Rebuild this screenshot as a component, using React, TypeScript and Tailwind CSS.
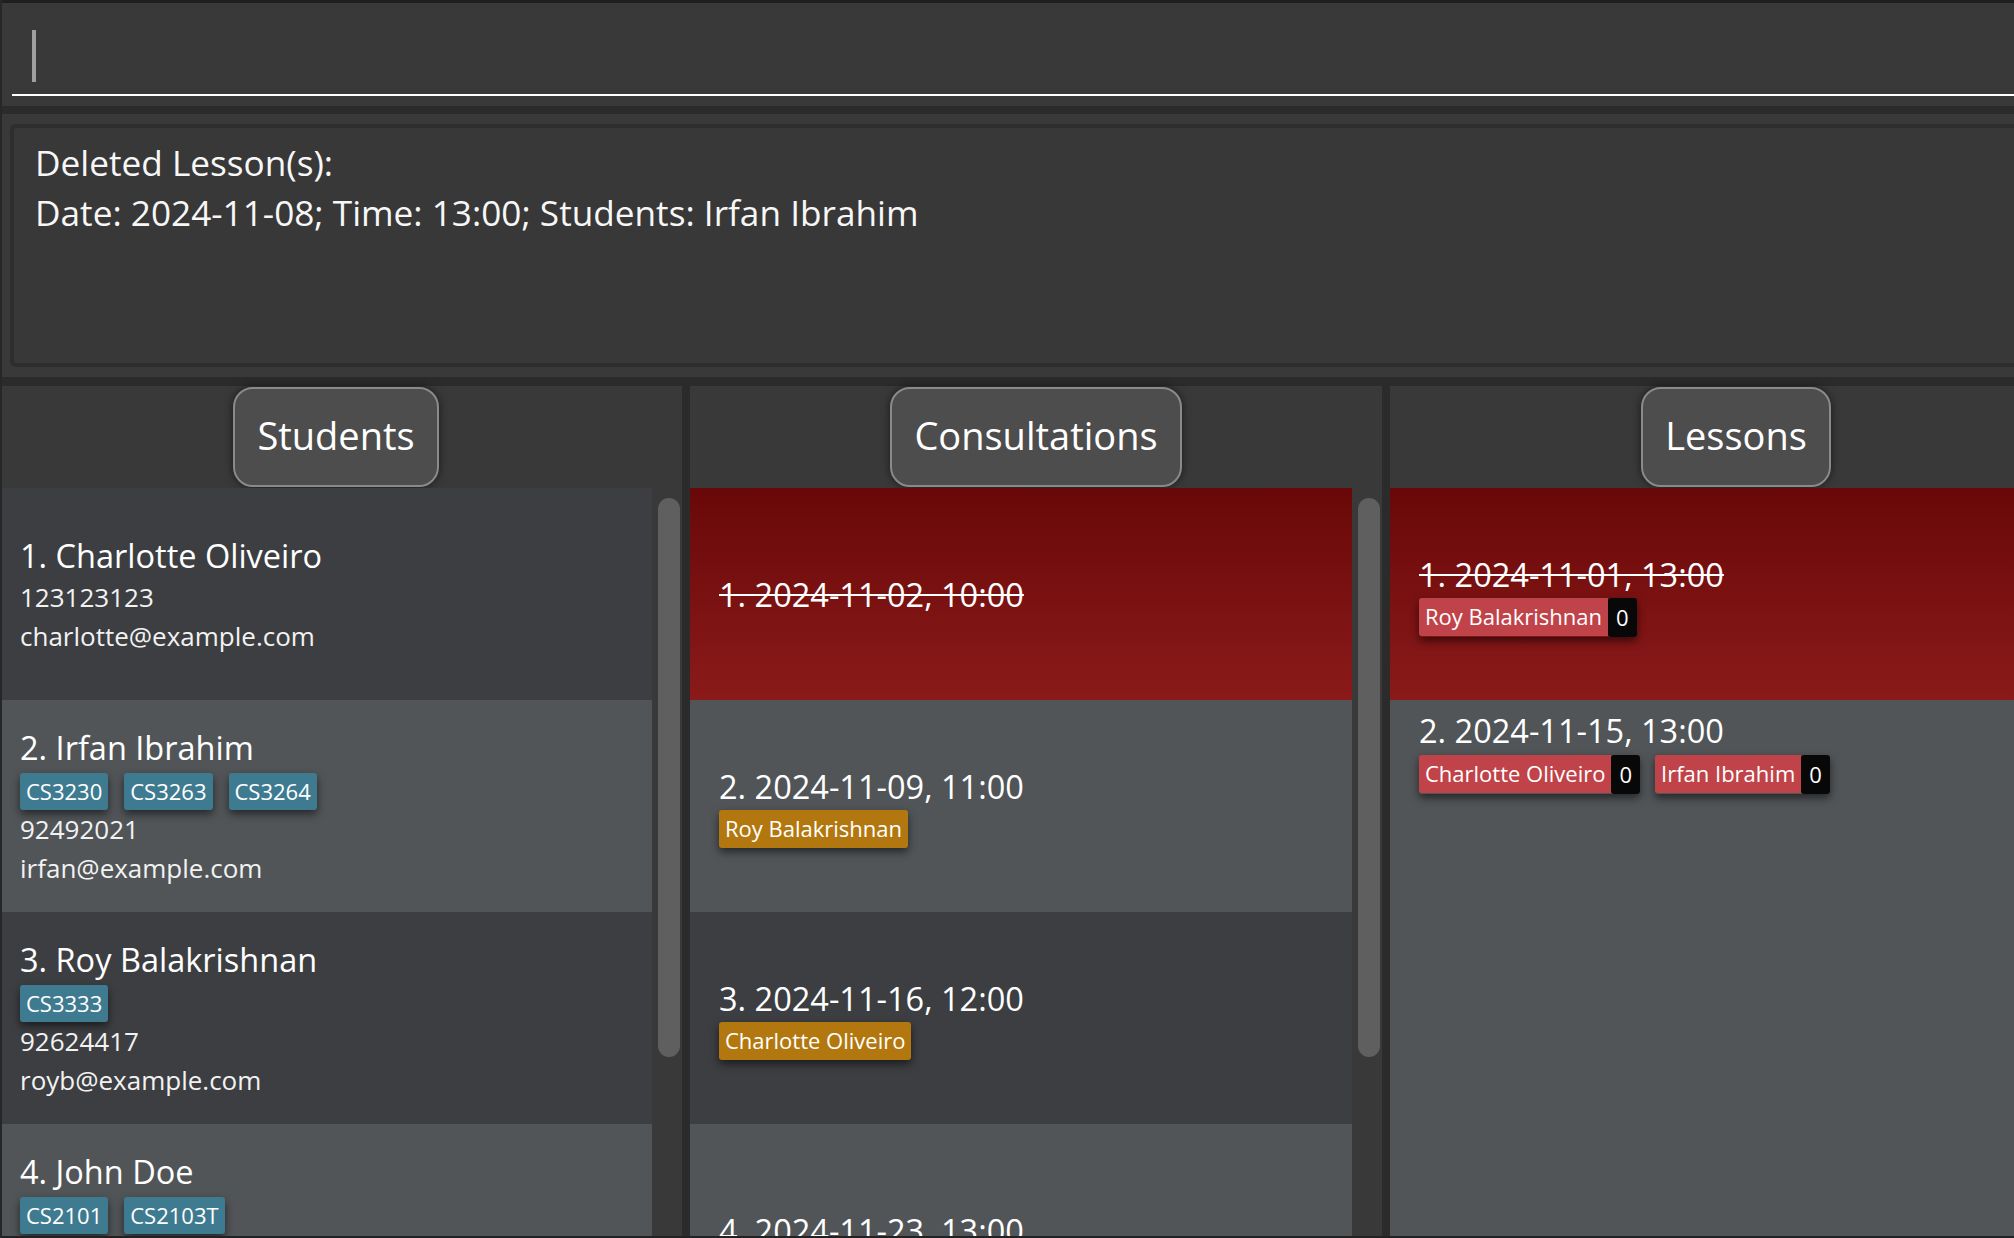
import React from 'react';

type Student = { name: string; tags: string[]; phone: string; email: string };

const students: Student[] = [
  { name: '1. Charlotte Oliveiro', tags: [], phone: '123123123', email: 'charlotte@example.com' },
  { name: '2. Irfan Ibrahim', tags: ['CS3230', 'CS3263', 'CS3264'], phone: '92492021', email: 'irfan@example.com' },
  { name: '3. Roy Balakrishnan', tags: ['CS3333'], phone: '92624417', email: 'royb@example.com' },
  { name: '4. John Doe', tags: ['CS2101', 'CS2103T'], phone: '98765432', email: 'johnd@example.com' },
];

type Consult = { title: string; students: string[]; deleted?: boolean };

const consults: Consult[] = [
  { title: '1. 2024-11-02, 10:00', students: [], deleted: true },
  { title: '2. 2024-11-09, 11:00', students: ['Roy Balakrishnan'] },
  { title: '3. 2024-11-16, 12:00', students: ['Charlotte Oliveiro'] },
  { title: '4. 2024-11-23, 13:00', students: [] },
];

const rowBg = (i: number) => (i % 2 === 0 ? 'bg-[#3c3e41]' : 'bg-[#515558]');

function HeaderButton({ label, extra }: { label: string; extra?: string }) {
  return (
    <div className={`h-[102px] shrink-0 flex justify-center pt-[1px] bg-[#393939] ${extra ?? ''}`}>
      <div className="h-[100px] px-[22px] pb-[4px] flex items-center rounded-[20px] border-2 border-[#8a8a8a] bg-[#4d4d4d] text-[38px] leading-none text-white shadow-[0_0_8px_rgba(0,0,0,0.55)]">
        {label}
      </div>
    </div>
  );
}

function Scrollbar() {
  return (
    <div className="w-[30px] shrink-0 bg-[#393939] pt-[10px] pl-[6px]">
      <div className="w-[22px] h-[559px] rounded-full bg-[#5f5f5f]" />
    </div>
  );
}

function StudentRow({ s, i }: { s: Student; i: number }) {
  return (
    <div className={`h-[212px] shrink-0 flex flex-col justify-center pl-[18px] ${rowBg(i)}`}>
      <div className="text-[32.5px] leading-[45px] text-white whitespace-nowrap">{s.name}</div>
      {s.tags.length > 0 && (
        <div className="mt-[3px] flex gap-[16px]">
          {s.tags.map((t) => (
            <span
              key={t}
              className="h-[37px] px-[6px] rounded-[3px] bg-[#3e7b91] text-[22px] leading-[36px] text-white shadow-[0_4px_8px_rgba(0,0,0,0.55)]"
            >
              {t}
            </span>
          ))}
        </div>
      )}
      <div className="text-[26px] leading-[39px] text-[#f2f2f2]">{s.phone}</div>
      <div className="text-[26px] leading-[39px] text-[#f2f2f2]">{s.email}</div>
    </div>
  );
}

function ConsultRow({ c, i }: { c: Consult; i: number }) {
  const bg = c.deleted ? 'bg-linear-to-b from-[#690808] to-[#8b1a1a]' : rowBg(i);
  return (
    <div className={`h-[212px] shrink-0 flex flex-col justify-center pl-[29px] ${bg}`}>
      <div
        className={`text-[32.5px] leading-[45px] text-white whitespace-nowrap ${
          c.deleted ? 'line-through decoration-white decoration-2' : ''
        }`}
      >
        {c.title}
      </div>
      {c.students.length > 0 && (
        <div className="mt-[1px] flex gap-[16px]">
          {c.students.map((t) => (
            <span
              key={t}
              className="h-[38px] px-[6px] rounded-[3px] bg-[#b2780f] text-[22px] leading-[36px] text-white shadow-[0_4px_8px_rgba(0,0,0,0.55)]"
            >
              {t}
            </span>
          ))}
        </div>
      )}
    </div>
  );
}

function LessonTag({ name }: { name: string }) {
  return (
    <div className="flex shadow-[0_4px_8px_rgba(0,0,0,0.55)] rounded-[3px]">
      <span className="h-[38px] px-[6px] rounded-l-[3px] bg-[#c0434a] text-[22px] leading-[36px] text-white whitespace-nowrap">
        {name}
      </span>
      <span className="h-[39px] px-[8px] rounded-[3px] bg-[#080808] text-[22px] leading-[38px] text-white">0</span>
    </div>
  );
}

export default function App() {
  return (
    <div className="w-[2014px] h-[1238px] overflow-hidden flex flex-col bg-[#2b2b2b] border-l-2 border-[#272727] font-['Open_Sans','Noto_Sans',sans-serif] text-white">
      {/* top strip */}
      <div className="h-[3px] shrink-0 bg-[#1f1f1f]" />

      {/* command box */}
      <div className="h-[103px] shrink-0 bg-[#393939] flex flex-col">
        <div className="pt-[27px] pl-[30px]">
          <div className="w-[4px] h-[52px] bg-[#a0a0a0]" />
        </div>
        <div className="mt-[12px] ml-[10px] h-[2px] bg-white" />
      </div>

      <div className="h-[8px] shrink-0 bg-[#2b2b2b]" />

      {/* result display */}
      <div className="h-[263px] shrink-0 bg-[#393939] pt-[10px] pb-[10px] pl-[8px]">
        <div className="h-full border-4 border-r-0 border-[#2e2e2e] rounded-l-[6px] bg-[#383838] pt-[9px] pl-[21px] text-[35.2px] leading-[50px] text-[#f7f7f7]">
          <div>Deleted Lesson(s):</div>
          <div>Date: 2024-11-08; Time: 13:00; Students: Irfan Ibrahim</div>
        </div>
      </div>

      <div className="h-[9px] shrink-0 bg-[#2b2b2b]" />

      {/* panels */}
      <div className="h-[850px] shrink-0 flex">
        {/* Students */}
        <div className="w-[680px] shrink-0 flex flex-col">
          <HeaderButton label="Students" extra="pr-[12px]" />
          <div className="h-[748px] flex">
            <div className="w-[650px] shrink-0 flex flex-col overflow-hidden">
              {students.map((s, i) => (
                <StudentRow key={s.name} s={s} i={i} />
              ))}
            </div>
            <Scrollbar />
          </div>
        </div>

        <div className="w-[8px] shrink-0 bg-[#2b2b2b]" />

        {/* Consultations */}
        <div className="w-[692px] shrink-0 flex flex-col">
          <HeaderButton label="Consultations" />
          <div className="h-[748px] flex">
            <div className="w-[662px] shrink-0 flex flex-col overflow-hidden">
              {consults.map((c, i) => (
                <ConsultRow key={c.title} c={c} i={i} />
              ))}
            </div>
            <Scrollbar />
          </div>
        </div>

        <div className="w-[8px] shrink-0 bg-[#2b2b2b]" />

        {/* Lessons */}
        <div className="w-[692px] shrink-0 flex flex-col">
          <HeaderButton label="Lessons" />
          <div className="h-[748px] flex flex-col">
            <div className="h-[212px] shrink-0 flex flex-col justify-center pl-[29px] bg-linear-to-b from-[#690808] to-[#8b1a1a]">
              <div className="text-[32.5px] leading-[45px] text-white whitespace-nowrap line-through decoration-white decoration-2">
                1. 2024-11-01, 13:00
              </div>
              <div className="mt-[1px] flex gap-[15px]">
                <LessonTag name="Roy Balakrishnan" />
              </div>
            </div>
            <div className="flex-1 pt-[8px] pl-[29px] bg-[#515558]">
              <div className="text-[32.5px] leading-[45px] text-white whitespace-nowrap">2. 2024-11-15, 13:00</div>
              <div className="mt-[2px] flex gap-[15px]">
                <LessonTag name="Charlotte Oliveiro" />
                <LessonTag name="Irfan Ibrahim" />
              </div>
            </div>
          </div>
        </div>
      </div>

      <div className="h-[2px] shrink-0 bg-[#222222]" />
    </div>
  );
}
